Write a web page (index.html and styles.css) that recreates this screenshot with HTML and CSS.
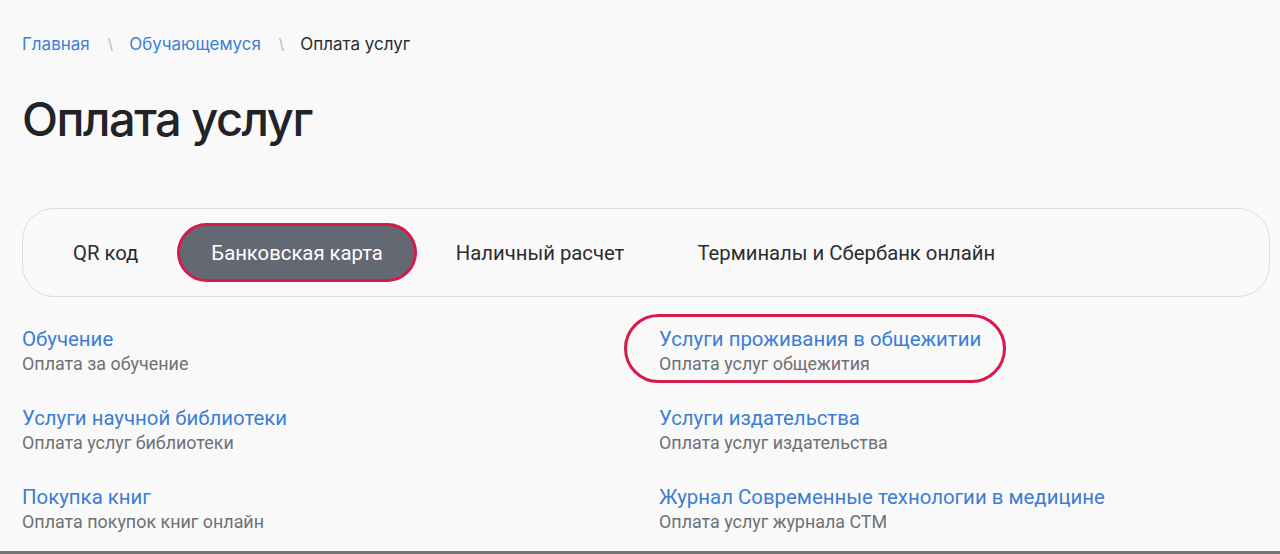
FILE: index.html
```html
<!DOCTYPE html>
<html lang="ru">
<head>
<meta charset="utf-8">
<title>Оплата услуг</title>
<link rel="stylesheet" href="styles.css">
</head>
<body>
<div class="page">
  <nav class="breadcrumbs">
    <a class="crumb-link" href="#">Главная</a>
    <span class="crumb-sep">\</span>
    <a class="crumb-link" href="#">Обучающемуся</a>
    <span class="crumb-sep">\</span>
    <span class="crumb-current">Оплата услуг</span>
  </nav>

  <h1 class="title">Оплата услуг</h1>

  <div class="tabs">
    <span class="tab">QR код</span>
    <span class="tab tab-active">Банковская карта</span>
    <span class="tab">Наличный расчет</span>
    <span class="tab">Терминалы и Сбербанк онлайн</span>
  </div>

  <div class="services">
    <div class="service">
      <a class="service-title" href="#">Обучение</a>
      <div class="service-desc">Оплата за обучение</div>
    </div>
    <div class="service service-marked">
      <a class="service-title" href="#">Услуги проживания в общежитии</a>
      <div class="service-desc">Оплата услуг общежития</div>
    </div>
    <div class="service">
      <a class="service-title" href="#">Услуги научной библиотеки</a>
      <div class="service-desc">Оплата услуг библиотеки</div>
    </div>
    <div class="service">
      <a class="service-title" href="#">Услуги издательства</a>
      <div class="service-desc">Оплата услуг издательства</div>
    </div>
    <div class="service">
      <a class="service-title" href="#">Покупка книг</a>
      <div class="service-desc">Оплата покупок книг онлайн</div>
    </div>
    <div class="service">
      <a class="service-title" href="#">Журнал Современные технологии в медицине</a>
      <div class="service-desc">Оплата услуг журнала СТМ</div>
    </div>
  </div>

  <div class="bottom-rule"></div>
</div>
</body>
</html>
```

FILE: styles.css
```css
*, *::before, *::after { box-sizing: border-box; }

html, body {
  margin: 0;
  padding: 0;
  background: #f9f9fa;
}

.page {
  height: 554px;
  display: flex;
  flex-direction: column;
  padding: 0 10px 0 22px;
  overflow: hidden;
}

.breadcrumbs {
  display: flex;
  align-items: center;
  padding-top: 34px;
  font-family: Inter, "Noto Sans", sans-serif;
  font-size: 17px;
  line-height: 20px;
}

.crumb-link {
  color: #3f7ed6;
  text-decoration: none;
}

.crumb-sep {
  color: #b5b7bb;
  padding: 0 16px 0 18px;
  font-size: 15px;
}

.crumb-current {
  color: #2a2c30;
}

.title {
  margin: 37px 0 0 0;
  font-family: Inter, "Noto Sans", sans-serif;
  font-weight: 500;
  font-size: 47px;
  line-height: 56px;
  letter-spacing: -1.5px;
  color: #212328;
}

.tabs {
  margin-top: 61px;
  height: 89px;
  border: 1px solid #dcdde0;
  border-radius: 32px;
  display: flex;
  align-items: center;
  gap: 5px;
  padding-left: 16px;
  font-family: Roboto, "Noto Sans", sans-serif;
  font-size: 20.3px;
  color: #2b2d31;
}

.tab {
  display: flex;
  align-items: center;
  height: 59px;
  padding: 0 34px;
  border-radius: 30px;
  white-space: nowrap;
}

.tab-active {
  background: #636873;
  color: #ffffff;
  border: 3px solid #d51a4c;
  padding: 0 31px;
}

.services {
  display: grid;
  grid-template-columns: 611px 1fr;
  column-gap: 26px;
  row-gap: 31px;
  margin-top: 30px;
  font-family: Roboto, "Noto Sans", sans-serif;
}

.service {
  display: flex;
  flex-direction: column;
  gap: 2px;
}

.service-marked {
  position: relative;
}

.service-marked::before {
  content: "";
  position: absolute;
  left: -35px;
  top: -13px;
  width: 382px;
  height: 69px;
  border: 3px solid #d51a4c;
  border-radius: 35px;
}

.service-title {
  color: #3d7dd4;
  font-size: 20.4px;
  line-height: 24px;
  text-decoration: none;
}

.service-desc {
  color: #6f7073;
  font-size: 17.9px;
  line-height: 22px;
}

.bottom-rule {
  margin-top: auto;
  margin-left: -22px;
  margin-right: -10px;
  height: 3px;
  background: #737373;
}
```
